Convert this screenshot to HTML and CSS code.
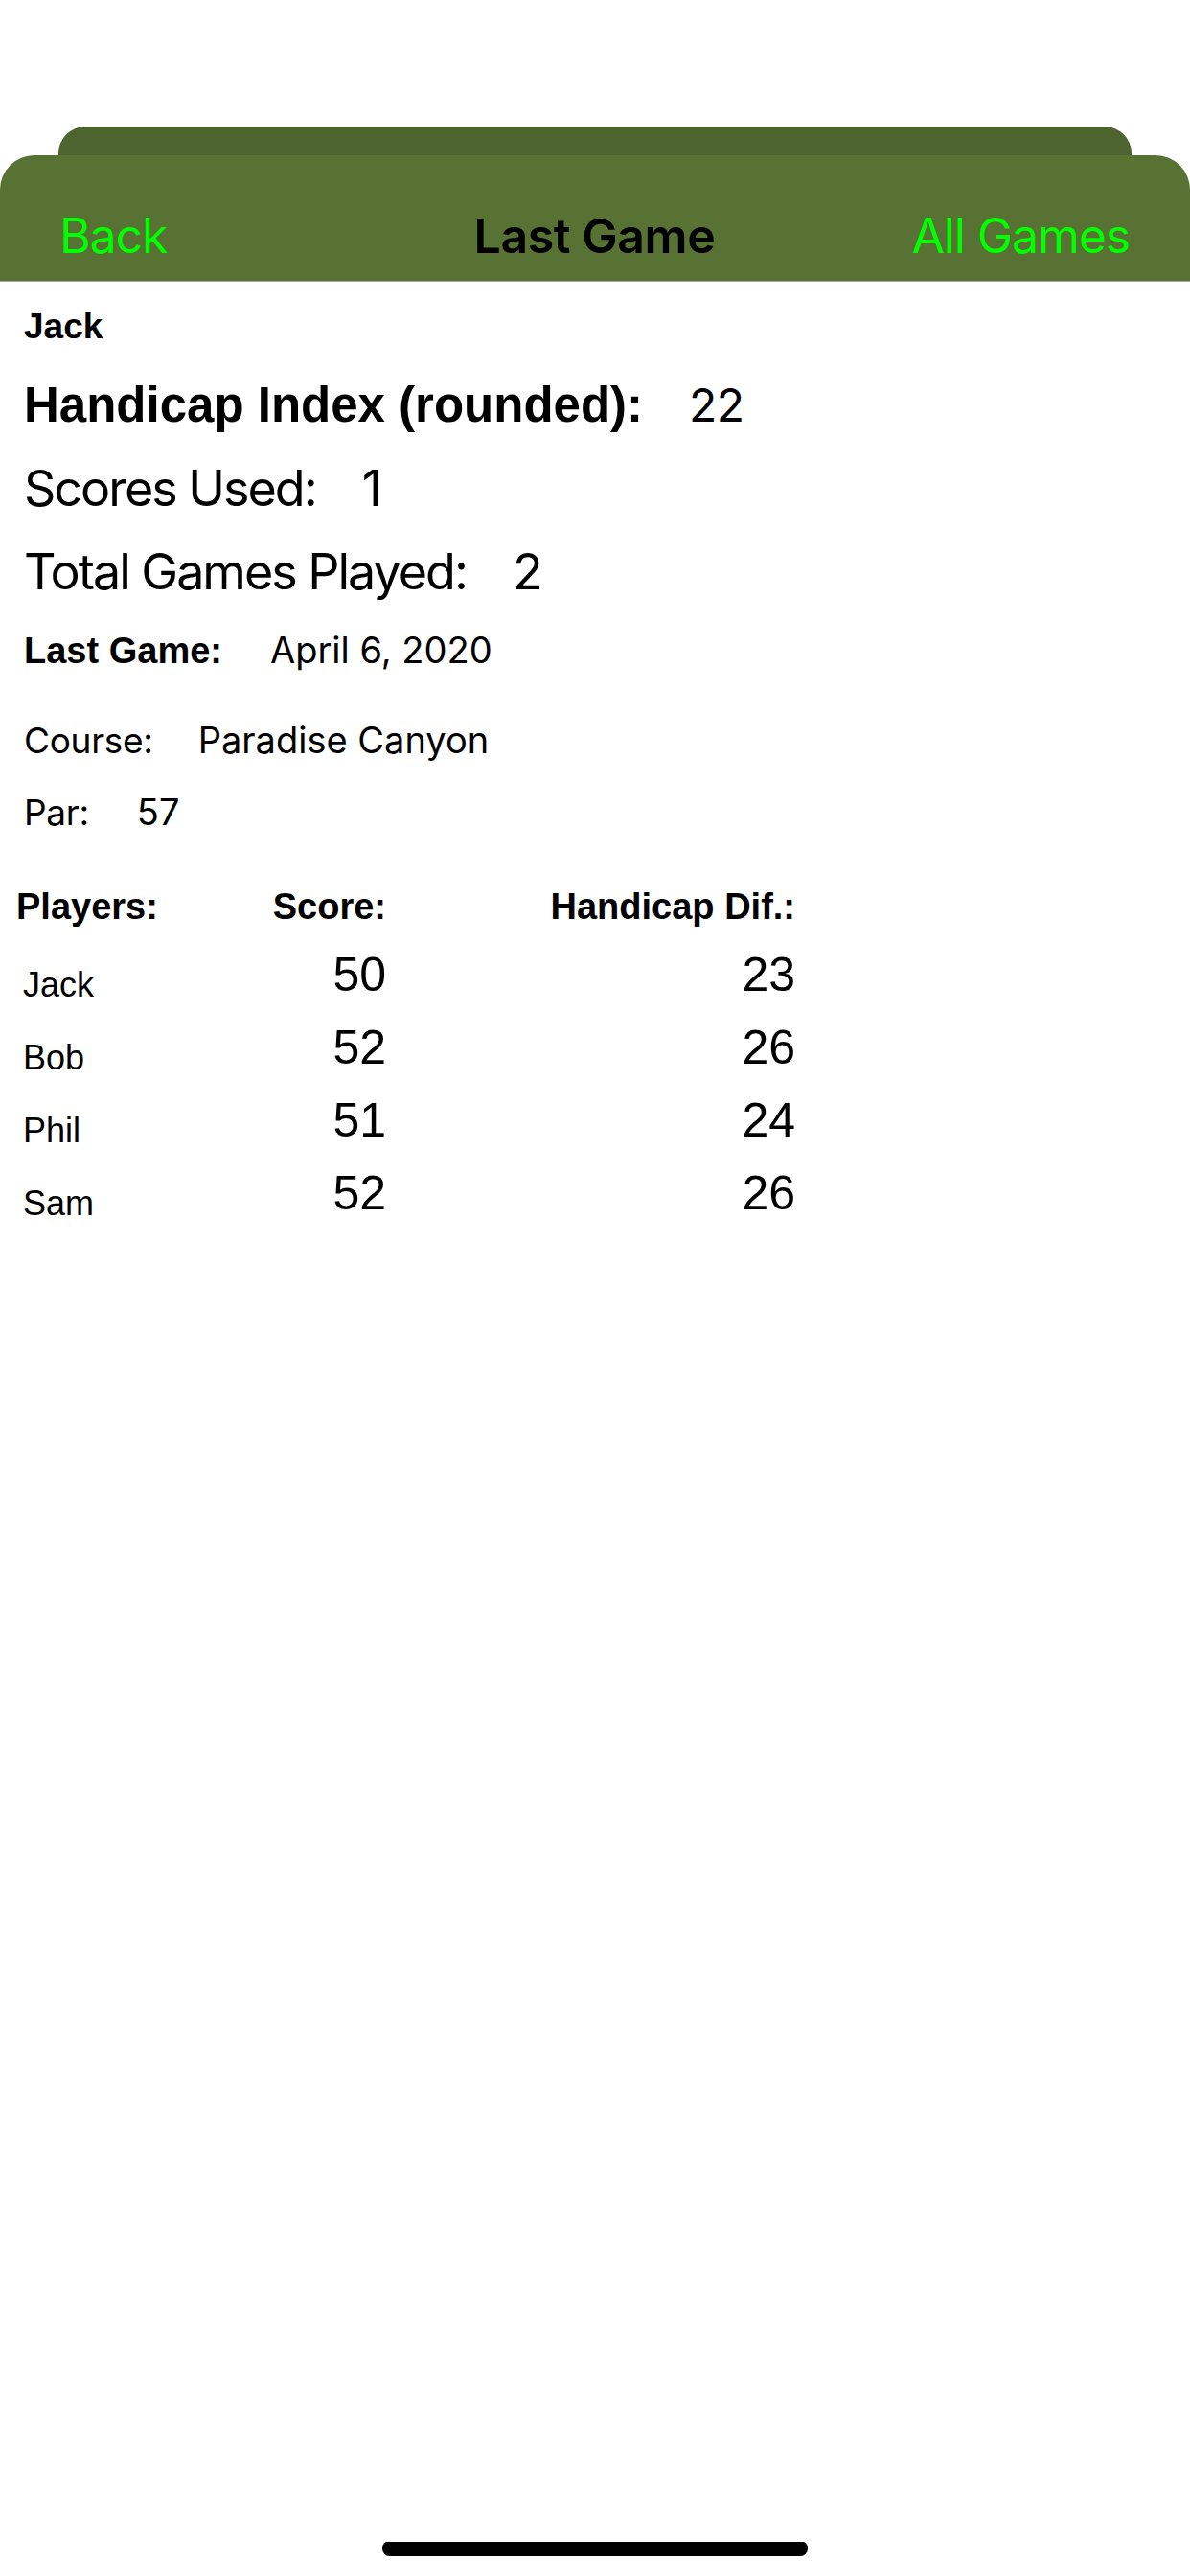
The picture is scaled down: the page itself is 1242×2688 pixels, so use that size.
FILE: index.html
```html
<!DOCTYPE html>
<html lang="en">
<head>
<meta charset="utf-8">
<title>Last Game</title>
<link rel="stylesheet" href="styles.css">
</head>
<body>
<div class="screen">
  <header class="nav">
    <div class="nav-tab"></div>
    <div class="nav-bar">
      <a class="nav-btn nav-left">Back</a>
      <h1 class="nav-title">Last Game</h1>
      <a class="nav-btn nav-right">All Games</a>
    </div>
  </header>

  <main class="content">
    <div class="player-name">Jack</div>
    <div class="row row-index">
      <span class="label-index">Handicap Index (rounded):</span>
      <span class="value-index">22</span>
    </div>
    <div class="row row-stat row-scores">
      <span>Scores Used:</span>
      <span>1</span>
    </div>
    <div class="row row-stat row-total">
      <span>Total Games Played:</span>
      <span>2</span>
    </div>
    <div class="row row-meta row-last">
      <span class="label-bold">Last Game:</span>
      <span class="value-meta">April 6, 2020</span>
    </div>
    <div class="row row-meta row-course">
      <span class="label-meta">Course:</span>
      <span class="value-meta">Paradise Canyon</span>
    </div>
    <div class="row row-meta row-par">
      <span class="label-meta">Par:</span>
      <span class="value-meta">57</span>
    </div>

    <section class="scores">
      <div class="trow thead">
        <span class="th">Players:</span>
        <span class="th num">Score:</span>
        <span class="th num">Handicap Dif.:</span>
      </div>
      <div class="trow tbody">
        <span class="pname">Jack</span>
        <span class="pnum num">50</span>
        <span class="pnum num">23</span>
      </div>
      <div class="trow tbody">
        <span class="pname">Bob</span>
        <span class="pnum num">52</span>
        <span class="pnum num">26</span>
      </div>
      <div class="trow tbody">
        <span class="pname">Phil</span>
        <span class="pnum num">51</span>
        <span class="pnum num">24</span>
      </div>
      <div class="trow tbody">
        <span class="pname">Sam</span>
        <span class="pnum num">52</span>
        <span class="pnum num">26</span>
      </div>
    </section>
  </main>

  <div class="home-indicator"></div>
</div>
</body>
</html>
```

FILE: styles.css
```css
* {
  box-sizing: border-box;
}

html, body {
  margin: 0;
  padding: 0;
  background: #ffffff;
}

.screen {
  width: 1242px;
  min-height: 2688px;
  display: flex;
  flex-direction: column;
  color: #000000;
  font-family: "Inter", "Liberation Sans", sans-serif;
}

/* ---------- Navigation ---------- */
.nav {
  padding-top: 132px;
}

.nav-tab {
  height: 30px;
  margin: 0 61px;
  background: #4e642f;
  border-radius: 28px 28px 0 0;
}

.nav-bar {
  height: 132px;
  background: #587233;
  border-radius: 36px 36px 0 0;
  border-bottom: 1px solid #a9a9a9;
  display: grid;
  grid-template-columns: 1fr auto 1fr;
  align-items: end;
  padding: 0 63px 17px 62px;
}

.nav-btn {
  font-family: "Inter", sans-serif;
  font-size: 50px;
  line-height: 60px;
  letter-spacing: -1.1px;
  color: #00ff00;
}

.nav-left {
  justify-self: start;
}

.nav-right {
  justify-self: end;
}

.nav-title {
  margin: 0;
  font-family: "Inter", sans-serif;
  font-weight: 600;
  font-size: 50px;
  line-height: 60px;
  letter-spacing: -0.4px;
  color: #000000;
}

/* ---------- Content ---------- */
.content {
  padding: 17px 0 0 25px;
}

.player-name {
  font-family: "Liberation Sans", Arial, sans-serif;
  font-weight: bold;
  font-size: 37px;
  line-height: 60px;
}

.row {
  display: flex;
  align-items: baseline;
  gap: 48px;
}

.row-index {
  margin-top: 12px;
  line-height: 80px;
  gap: 48px;
}

.label-index {
  font-family: "Liberation Sans", Arial, sans-serif;
  font-weight: bold;
  font-size: 51px;
}

.value-index {
  font-family: "Inter", sans-serif;
  font-size: 48px;
  letter-spacing: -0.5px;
}

.row-stat {
  line-height: 80px;
  font-family: "Inter", sans-serif;
  font-size: 52px;
  letter-spacing: -2px;
}

.row-scores {
  margin-top: 7px;
}

.row-total {
  margin-top: 7px;
}

.row-meta {
  line-height: 60px;
}

.row-last {
  margin-top: 11px;
  gap: 50px;
}

.row-course {
  margin-top: 33px;
  gap: 47px;
}

.row-par {
  margin-top: 14px;
  gap: 50px;
}

.label-bold {
  font-family: "Liberation Sans", Arial, sans-serif;
  font-weight: bold;
  font-size: 38px;
}

.label-meta {
  font-family: "Inter", sans-serif;
  font-size: 37px;
  letter-spacing: -0.3px;
}

.value-meta {
  font-family: "Inter", sans-serif;
  font-size: 38px;
  letter-spacing: 0;
}

/* ---------- Score table ---------- */
.scores {
  margin: 38px 0 0 -8px;
}

.trow {
  display: grid;
  grid-template-columns: 160px 226px 427px;
  font-family: "Liberation Sans", Arial, sans-serif;
}

.thead {
  line-height: 60px;
  align-items: baseline;
  margin-bottom: 3px;
}

.th {
  font-weight: bold;
  font-size: 38px;
}

.tbody {
  height: 76px;
  align-items: end;
}

.pname {
  font-size: 36px;
  line-height: 54px;
  padding-left: 7px;
}

.pnum {
  font-size: 50px;
  line-height: 76px;
}

.num {
  text-align: right;
}

/* ---------- Home indicator ---------- */
.home-indicator {
  margin: auto auto 21px;
  width: 444px;
  height: 15px;
  border-radius: 8px;
  background: #000000;
}
```
